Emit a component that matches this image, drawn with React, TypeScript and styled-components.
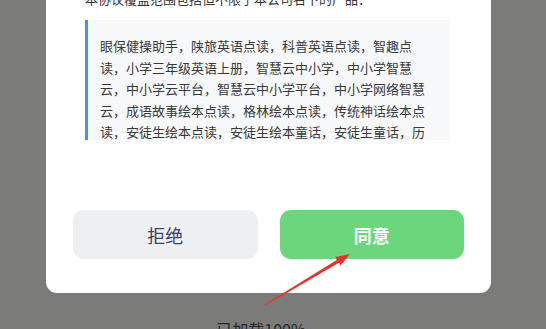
import React from "react";
import styled, { createGlobalStyle } from "styled-components";

const GlobalStyle = createGlobalStyle`
  html, body {
    margin: 0;
    padding: 0;
  }
  body {
    font-family: "Noto Sans CJK SC", "Noto Sans", sans-serif;
    background: #7b7c7a;
  }
`;

const Page = styled.div`
  position: relative;
  height: 100vh;
  overflow: hidden;
  display: flex;
  flex-direction: column;
  align-items: center;
  background: #7b7c7a;
`;

const Modal = styled.div`
  width: 445px;
  margin-left: -9px;
  background: #fff;
  border-radius: 0 0 11px 11px;
  display: flex;
  flex-direction: column;
  flex-shrink: 0;
`;

const Body = styled.div`
  height: 140px;
  overflow: hidden;
  padding: 0 42px 0 39px;
`;

const Scrolled = styled.div`
  margin-top: -12px;
`;

const Intro = styled.p`
  margin: 0 0 11px;
  font-size: 13px;
  line-height: 21px;
  color: #333;
`;

const Quote = styled.div`
  border-left: 3px solid #4a93de;
  background: #f7f8fa;
  padding: 15px 19px 16px 12px;
  font-size: 13px;
  line-height: 21.5px;
  color: #383838;
`;

const Footer = styled.div`
  display: flex;
  gap: 22px;
  padding: 70px 27px 34px;
`;

const Button = styled.button<{ $primary?: boolean }>`
  flex: 1;
  height: 49px;
  border: none;
  border-radius: 11px;
  font-family: "Noto Sans CJK SC", "Noto Sans", sans-serif;
  font-size: 18px;
  font-weight: ${(p) => (p.$primary ? 700 : 400)};
  background: ${(p) => (p.$primary ? "#6bd67c" : "#eeeff1")};
  color: ${(p) => (p.$primary ? "#fff" : "#3b4263")};
  cursor: pointer;
`;

const Loading = styled.div`
  margin-top: 24px;
  margin-left: -24px;
  font-size: 16px;
  line-height: 24px;
  color: #262626;
`;

const Arrow = styled.svg`
  position: absolute;
  left: 0;
  top: 0;
  pointer-events: none;
`;

const products =
  "眼保健操助手，陕旅英语点读，科普英语点读，智趣点读，小学三年级英语上册，智慧云中小学，中小学智慧云，中小学云平台，智慧云中小学平台，中小学网络智慧云，成语故事绘本点读，格林绘本点读，传统神话绘本点读，安徒生绘本点读，安徒生绘本童话，安徒生童话，历史故事绘本点读，唐诗三百首点读，儿童英语启蒙。";

export default function App() {
  return (
    <Page>
      <GlobalStyle />
      <Modal>
        <Body>
          <Scrolled>
            <Intro>本协议覆盖范围包括但不限于本公司名下的产品：</Intro>
            <Quote>{products}</Quote>
          </Scrolled>
        </Body>
        <Footer>
          <Button>拒绝</Button>
          <Button $primary>同意</Button>
        </Footer>
      </Modal>
      <Loading>已加载100%</Loading>
      <Arrow width="546" height="329" viewBox="0 0 546 329">
        <polygon
          points="264.7,304.6 265.3,305.4 339.3,262.5 340.6,265.5 350,254 335.4,256.9 336.7,259.9"
          fill="#e8322a"
        />
      </Arrow>
    </Page>
  );
}
